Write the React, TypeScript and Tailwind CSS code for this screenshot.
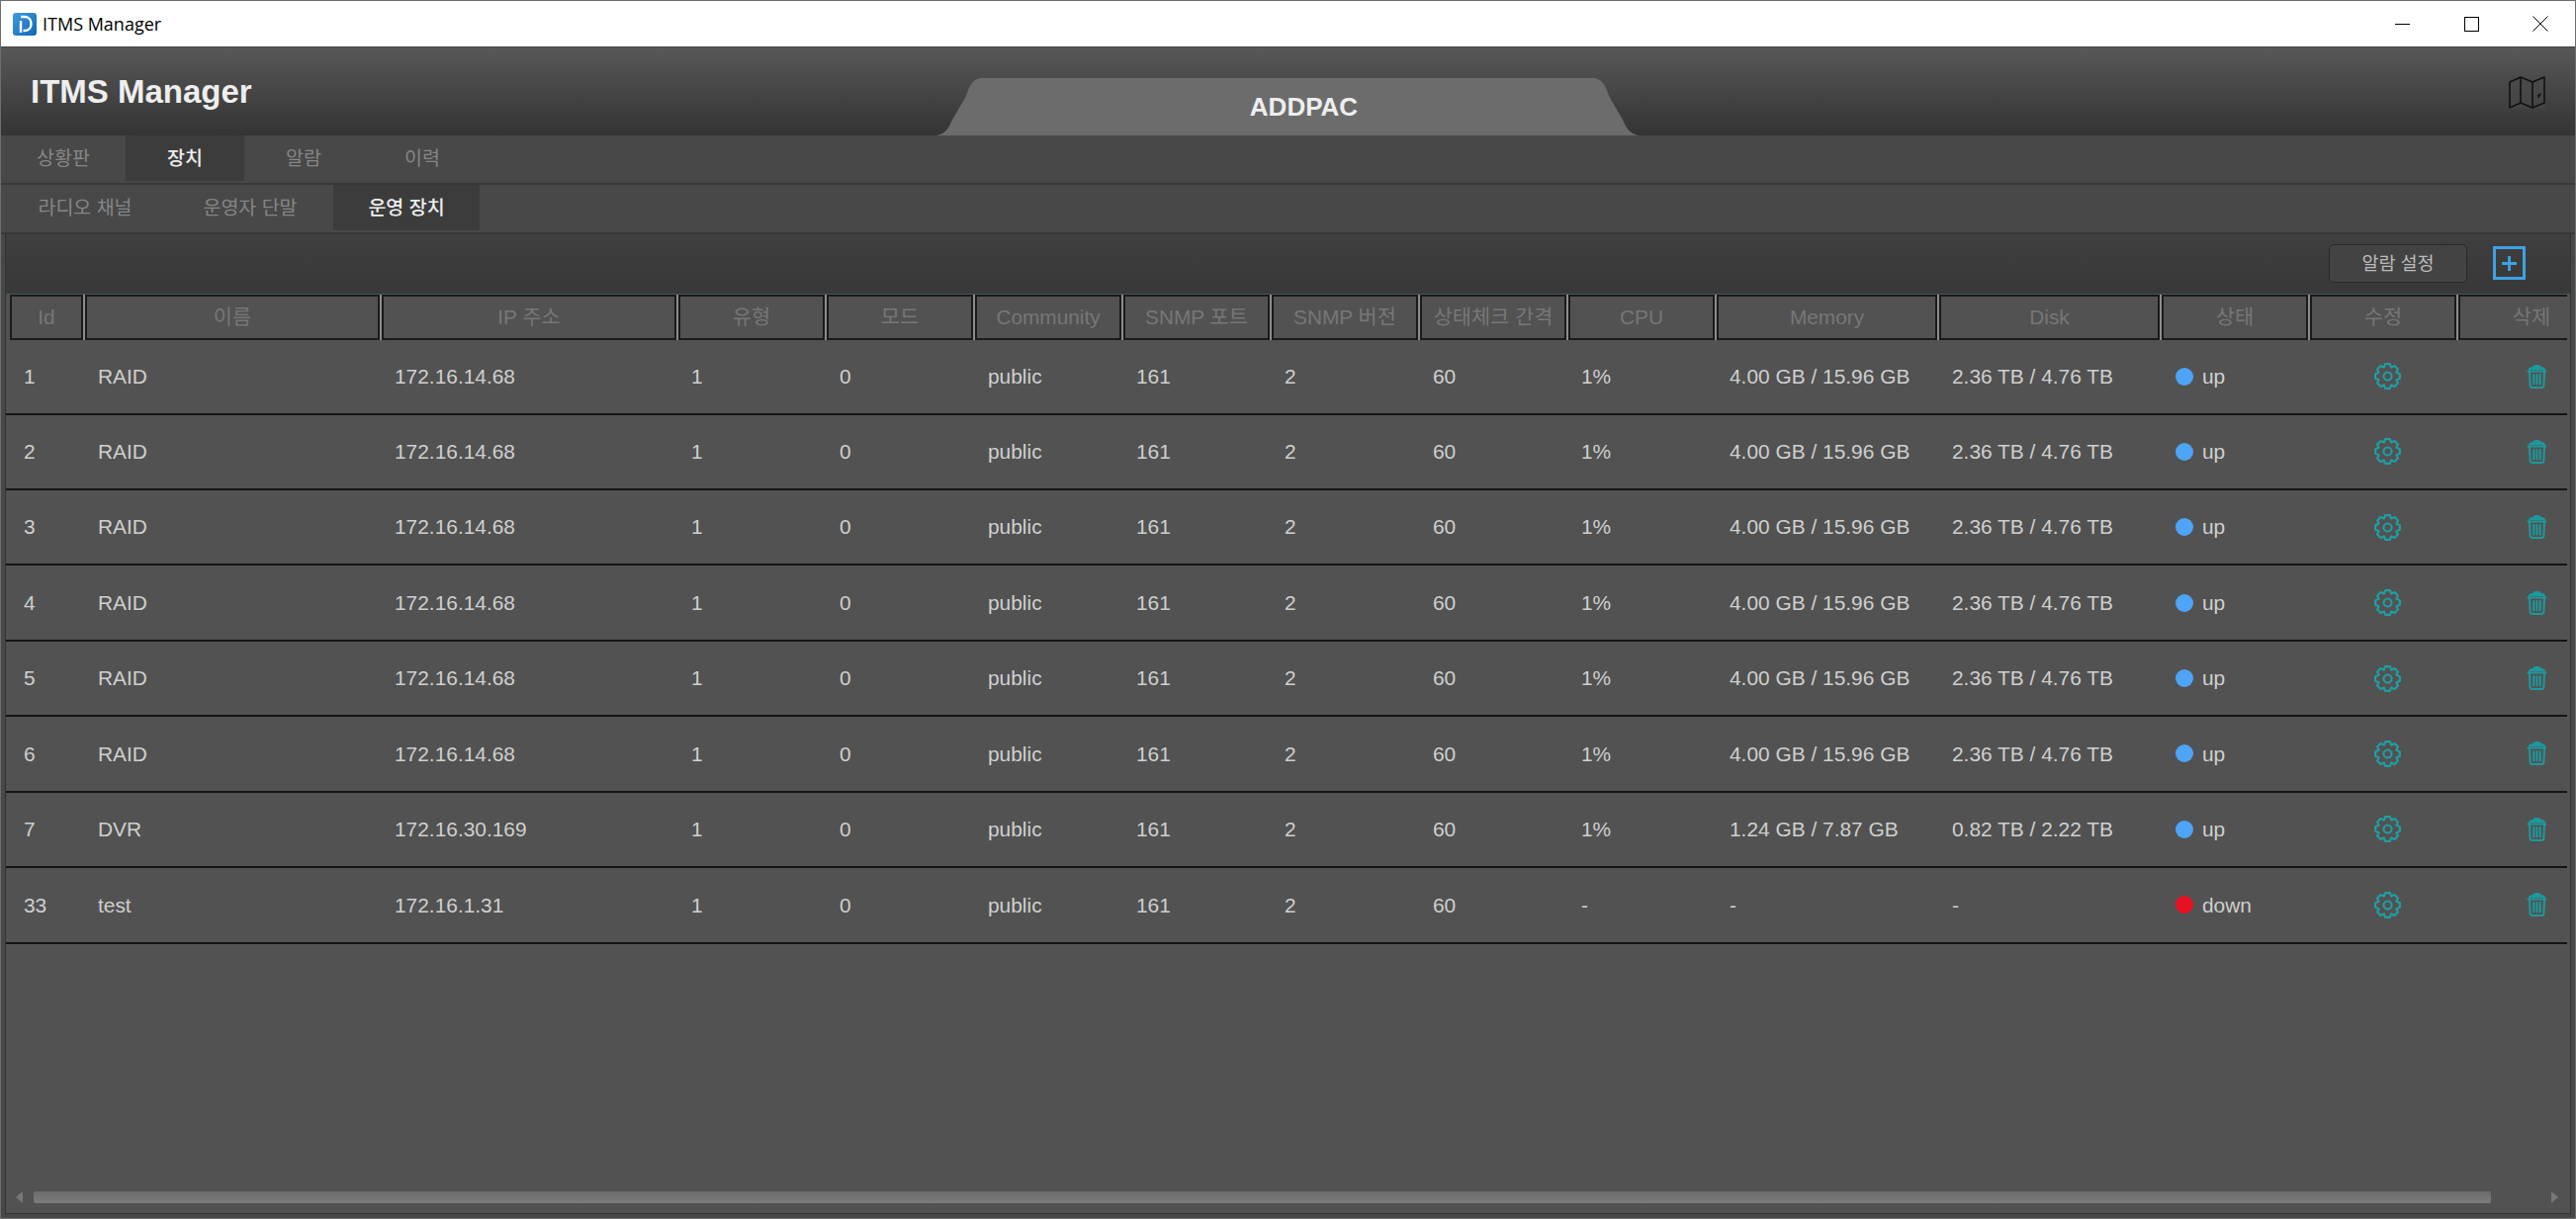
import React from "react";

const columns = [
    { w: "w-[75px]", title: "Id" },
    { w: "w-[300px]", title: "이름" },
    { w: "w-[300px]", title: "IP 주소" },
    { w: "w-[150px]", title: "유형" },
    { w: "w-[150px]", title: "모드" },
    { w: "w-[150px]", title: "Community" },
    { w: "w-[150px]", title: "SNMP 포트" },
    { w: "w-[150px]", title: "SNMP 버전" },
    { w: "w-[150px]", title: "상태체크 간격" },
    { w: "w-[150px]", title: "CPU" },
    { w: "w-[225px]", title: "Memory" },
    { w: "w-[225px]", title: "Disk" },
    { w: "w-[150px]", title: "상태" },
    { w: "w-[150px]", title: "수정" },
    { w: "w-[150px]", title: "삭제" },
];

const raid = ["RAID", "172.16.14.68", "1", "0", "public", "161", "2", "60", "1%", "4.00 GB / 15.96 GB", "2.36 TB / 4.76 TB"];

const rows = [
    { id: "1", cells: raid, up: true },
    { id: "2", cells: raid, up: true },
    { id: "3", cells: raid, up: true },
    { id: "4", cells: raid, up: true },
    { id: "5", cells: raid, up: true },
    { id: "6", cells: raid, up: true },
    { id: "7", cells: ["DVR", "172.16.30.169", "1", "0", "public", "161", "2", "60", "1%", "1.24 GB / 7.87 GB", "0.82 TB / 2.22 TB"], up: true },
    { id: "33", cells: ["test", "172.16.1.31", "1", "0", "public", "161", "2", "60", "-", "-", "-"], up: false },
];

const topTabs = [
    { label: "상황판", w: "w-[120px] mr-[3px]" },
    { label: "장치", w: "w-[120px]", active: true },
    { label: "알람", w: "w-[120px]" },
    { label: "이력", w: "w-[120px]" },
];

const subTabs = [
    { label: "라디오 채널", w: "w-[166px]" },
    { label: "운영자 단말", w: "w-[168px]" },
    { label: "운영 장치", w: "w-[148px]", active: true },
];

// 8-tooth gear outline
const gearPath = (() => {
    const pts: string[] = [];
    for (let i = 0; i < 8; i++) {
        const a = (i * Math.PI) / 4 - Math.PI / 2;
        const step = Math.PI / 4;
        const p = (r: number, t: number) => `${(12 + r * Math.cos(t)).toFixed(2)} ${(12 + r * Math.sin(t)).toFixed(2)}`;
        pts.push(`${i === 0 ? "M" : "L"}${p(8.6, a - step * 0.5)}`);
        pts.push(`L${p(11.2, a - step * 0.24)}`);
        pts.push(`L${p(11.2, a + step * 0.24)}`);
        pts.push(`L${p(8.6, a + step * 0.5)}`);
    }
    return pts.join(" ") + " Z";
})();

const GearIcon = () => (
    <svg width="27" height="27" viewBox="0 0 24 24" fill="none" stroke="#1f9fa3" strokeWidth="1.9" strokeLinejoin="round">
        <path d={gearPath} />
        <circle cx="12" cy="12" r="3.6" />
    </svg>
);

const TrashIcon = () => (
    <svg width="21" height="24" viewBox="0 0 21 24" fill="none" stroke="#1c9a9e" strokeWidth="2" strokeLinecap="round" strokeLinejoin="round">
        <path d="M1.5 6.5 H19.5" />
        <path d="M3 5 C3 3 5 3 7 3 C7 1.5 8 1 10.5 1 C13 1 14 1.5 14 3 C16 3 18 3 18 5" fill="#1c9a9e" />
        <path d="M3 7 L3.6 21 C3.7 22.4 4.6 23 6 23 H15 C16.4 23 17.3 22.4 17.4 21 L18 7" />
        <path d="M7.3 10 V19.5 M10.5 10 V19.5 M13.7 10 V19.5" />
    </svg>
);

const MapIcon = () => (
    <svg width="37" height="34" viewBox="0 0 37 34" fill="none" stroke="#111" strokeWidth="1.6" strokeLinejoin="round" className="bg-[#4a4a4a]/40">
        <path d="M1 7 L12 2 L24 7 L36 2 V28 L24 33 L12 28 L1 33 Z" />
        <path d="M12 2 V28 M24 7 V33" />
        <path d="M29 21 L32 19 L30 23" strokeWidth="1.4" />
    </svg>
);

const Logo = () => (
    <svg width="24" height="23" viewBox="0 0 24 23">
        <defs>
            <linearGradient id="logoFill" x1="0" y1="0" x2="1" y2="1">
                <stop offset="0" stopColor="#3f9be0" />
                <stop offset="1" stopColor="#1266b5" />
            </linearGradient>
        </defs>
        <rect width="24" height="23" rx="3" fill="url(#logoFill)" />
        <path d="M8 4 H12 C16.5 4 18.5 7.5 18.5 11 C18.5 14.5 16.5 18 12 18 H10.5 M8 8 V20" fill="none" stroke="#fff" strokeWidth="2.4" />
    </svg>
);

const App: React.FC = () => {
    return (
        <div className="w-[2605px] h-[1233px] flex flex-col overflow-hidden border border-[#6e6e6e] bg-[#484848] font-['Liberation_Sans','Noto_Sans_CJK_KR',sans-serif]">
            {/* window title bar */}
            <div className="h-[46px] shrink-0 flex items-center bg-white">
                <div className="ml-[12px] mr-[6px] flex">
                    <Logo />
                </div>
                <span className="flex-1 text-[18px] text-black font-['Open_Sans',sans-serif]">ITMS Manager</span>
                <div className="w-[70px] flex justify-center">
                    <div className="w-[15px] h-px bg-black" />
                </div>
                <div className="w-[70px] flex justify-center">
                    <div className="w-[15px] h-[15px] border border-black" />
                </div>
                <div className="w-[70px] flex justify-center">
                    <svg width="16" height="16" viewBox="0 0 16 16" stroke="#000" strokeWidth="1">
                        <path d="M0.5 0.5 L15.5 15.5 M15.5 0.5 L0.5 15.5" />
                    </svg>
                </div>
            </div>

            {/* app header */}
            <div className="h-[90px] shrink-0 grid grid-cols-[1fr_710px_1fr] border-t border-[#444] bg-gradient-to-b from-[#585858] to-[#343434]">
                <div className="pl-[30px] pt-[25px] text-[33px] leading-[40px] font-bold text-[#eeeeee]">ITMS Manager</div>
                <div className="relative self-end h-[58px] flex items-center justify-center pl-[32px]">
                    <svg className="absolute inset-0 -left-px" width="710" height="58" viewBox="0 0 710 58">
                        <path d="M0 58 C8 57 13 50 15 44 L30 18 C33 8 37 0 46 0 L664 0 C673 0 677 8 680 18 L695 44 C697 50 702 57 710 58 Z" fill="#6c6c6c" />
                    </svg>
                    <span className="relative text-[26px] font-bold text-[#eeeeee]">ADDPAC</span>
                </div>
                <div className="flex justify-end pr-[30px] pt-[28px]">
                    <div>
                        <MapIcon />
                    </div>
                </div>
            </div>

            {/* main tabs */}
            <div className="h-[50px] shrink-0 flex pl-[3px] bg-[#484848] border-b-2 border-[#383838]">
                {topTabs.map((tab) => (
                    <div
                        key={tab.label}
                        className={`${tab.w} h-[46px] pt-[2px] flex items-center justify-center text-[19.5px] ${tab.active ? "bg-[#3c3c3c] text-[#eeeeee] font-medium" : "text-[#868686]"}`}
                    >
                        {tab.label}
                    </div>
                ))}
            </div>

            {/* sub tabs */}
            <div className="h-[50px] shrink-0 flex pl-[2px] bg-[#484848] border-b-2 border-[#383838]">
                {subTabs.map((tab) => (
                    <div
                        key={tab.label}
                        className={`${tab.w} h-[46px] pt-[2px] flex items-center justify-center text-[19.5px] ${tab.active ? "bg-[#3c3c3c] text-[#eeeeee] font-medium" : "text-[#868686]"}`}
                    >
                        {tab.label}
                    </div>
                ))}
            </div>

            {/* content */}
            <div className="flex-1 min-h-0 flex flex-col mx-[4px] mb-[4px] border-x border-b border-[#333333] bg-[#525252]">
                {/* toolbar */}
                <div className="h-[60px] shrink-0 flex items-start justify-end pr-[45px] border-b border-[#2b3c42] bg-gradient-to-b from-[#3f3f3f] to-[#383838]">
                    <div className="mt-[10px] w-[140px] h-[39px] flex items-center justify-center rounded-[5px] border border-[#2a2a2a] bg-[#434343] text-[18.5px] text-[#bbbbbb]">
                        알람 설정
                    </div>
                    <div className="mt-[12px] ml-[26px] w-[33px] h-[34px] flex items-center justify-center border-[3px] border-[#3ea2e5]">
                        <svg width="17" height="17" viewBox="0 0 17 17" stroke="#3ea2e5" strokeWidth="2.8">
                            <path d="M8.5 1 V16 M1 8.5 H16" />
                        </svg>
                    </div>
                </div>

                <div className="flex-1 min-h-0 mr-[3px] overflow-hidden">
                    {/* table head */}
                    <div className="h-[46px] mt-px flex pl-[4px]">
                        {columns.map((col, i) => (
                            <div key={col.title} className={`${i === 0 ? "w-[76px]" : col.w} shrink-0 border-r-2 border-[#8c8c8c]`}>
                                <div className="h-full flex items-center justify-center border-2 border-[#1b1b1b] text-[20.8px] text-[#777777]">
                                    {col.title}
                                </div>
                            </div>
                        ))}
                    </div>

                    {/* table body */}
                    <div className="w-full">
                        {rows.map((row) => (
                            <div key={row.id} className="h-[76.45px] flex items-center pl-[4px] border-b-2 border-[#141414] text-[20.9px] text-[#cfcfcf] first:h-[75.5px]">
                                <div className={`${columns[0].w} shrink-0 pl-[14px]`}>{row.id}</div>
                                {row.cells.map((text, i) => (
                                    <div key={i} className={`${columns[i + 1].w} shrink-0 pl-[14px]`}>
                                        {text}
                                    </div>
                                ))}
                                <div className={`${columns[12].w} shrink-0 pl-[15px] flex items-center gap-[9px]`}>
                                    <span className={`w-[18px] h-[18px] rounded-full ${row.up ? "bg-[#4ea4f6]" : "bg-[#e81123]"}`} />
                                    {row.up ? "up" : "down"}
                                </div>
                                <div className={`${columns[13].w} shrink-0 flex justify-center pl-[8px]`}>
                                    <GearIcon />
                                </div>
                                <div className={`${columns[14].w} shrink-0 flex justify-center pl-[10px]`}>
                                    <TrashIcon />
                                </div>
                            </div>
                        ))}
                    </div>
                </div>

                {/* horizontal scrollbar */}
                <div className="h-[12px] mb-[10px] shrink-0 flex items-center pl-[10px] pr-[12px]">
                    <div className="w-0 h-0 border-y-[6px] border-y-transparent border-r-[7px] border-r-[#777777]" />
                    <div className="ml-[11px] w-[2485px] h-[12px] rounded-[2px] bg-gradient-to-b from-[#6c6c6c] to-[#7c7c7c]" />
                    <div className="ml-auto w-0 h-0 border-y-[6px] border-y-transparent border-l-[7px] border-l-[#777777]" />
                </div>
            </div>
        </div>
    );
};

export default App;
